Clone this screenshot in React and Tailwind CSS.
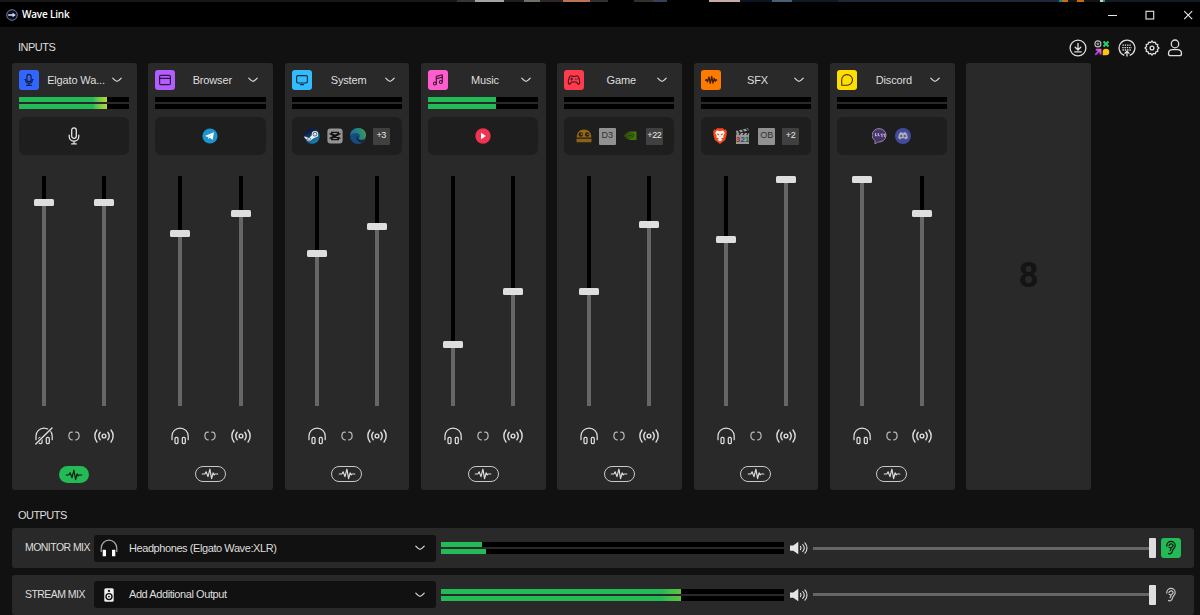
import React from "react";

const stroke = {
  fill: "none",
  stroke: "currentColor",
  strokeLinecap: "round",
  strokeLinejoin: "round",
};

function MicIcon({ className }) {
  return (
    <svg viewBox="0 0 12 18" className={className} {...stroke} strokeWidth="1.3">
      <rect x="3.7" y="0.9" width="4.6" height="10.4" rx="2.3" />
      <path d="M1.2 8.2v1.3a4.8 4.6 0 0 0 9.6 0V8.2M6 14.2v2.6M3.7 16.9h4.6" />
    </svg>
  );
}

function SmallMicIcon() {
  return (
    <svg viewBox="0 0 20 20" className="size-5" {...stroke} strokeWidth="1.1">
      <rect x="7.900" y="4.400" width="4.200" height="7.200" rx="2.100" />
      <path d="M5.900 9.500h.8v.5a3.300 3.300 0 0 0 6.600 0v-.5h.8M10 13.400v1.900M7.600 15.400h4.800" />
    </svg>
  );
}

function BrowserIcon() {
  return (
    <svg viewBox="0 0 20 20" className="size-5" {...stroke} strokeWidth="1.2">
      <rect x="4.6" y="5.4" width="10.8" height="9.2" rx="1.2" />
      <path d="M4.6 8.4h10.8" />
    </svg>
  );
}

function SystemIcon() {
  return (
    <svg viewBox="0 0 20 20" className="size-5" {...stroke} strokeWidth="1.2">
      <rect x="4.6" y="5.6" width="10.8" height="7.4" rx="1.4" />
      <path d="M8.4 14.6h3.2" />
    </svg>
  );
}

function MusicIcon() {
  return (
    <svg viewBox="0 0 20 20" className="size-5" {...stroke} strokeWidth="1.1">
      <path d="M8.3 13.4V6.4l6-1.6v7" />
      <path d="M8.3 8.7l6-1.6" />
      <circle cx="6.9" cy="13.5" r="1.5" />
      <circle cx="12.9" cy="12" r="1.5" />
    </svg>
  );
}

function GameIcon() {
  return (
    <svg viewBox="0 0 20 20" className="size-5" {...stroke} strokeWidth="1.1">
      <path d="M7 5.8c1 0 1 .7 3 .7s2-.7 3-.7c1.800 0 2.700 4.400 2.700 6.600 0 2.200-1.500 2.300-2.500.5-.3-.7-.7-.9-1.200-.9H8c-.5 0-.9.2-1.200.9-1 1.800-2.500 1.700-2.500-.5C4.300 10.200 5.200 5.800 7 5.800z" />
      <path d="M6.700 9h2M7.700 8v2M11.500 9h.2M13 9h.2" />
    </svg>
  );
}

function SfxIcon() {
  return (
    <svg viewBox="0 0 20 20" className="size-5" {...stroke} strokeWidth="1.3">
      <path d="M4.500 10.200l1-.8 1 2.400L8 7l1.300 6.400L10.700 6.500l1.300 6.500 1.200-4.500 1.100 2.700.9-1.600.5.500" />
    </svg>
  );
}

function ChatIcon() {
  return (
    <svg viewBox="0 0 20 20" className="size-5" {...stroke} strokeWidth="1.1">
      <path d="M4.700 15.200V10a5.400 5.300 0 1 1 5.400 5.200z" />
    </svg>
  );
}

function Chevron() {
  return (
    <svg viewBox="0 0 10 6" className="h-[6px] w-[10px] shrink-0 text-[#d8d8d8]" {...stroke} strokeWidth="1.2">
      <path d="M0.800 1.200C2.500 3 3.800 4.300 5 4.300S7.500 3 9.200 1.200" />
    </svg>
  );
}

function HeadphonesIcon({ muted }) {
  return (
    <svg viewBox="0 0 20 20" className="size-5" {...stroke} strokeWidth="1.250">
      <path d="M2 13.700V10a8.100 8 0 0 1 16.200 0v3.700" />
      <rect x="5" y="11.400" width="3" height="6.300" rx="1.100" />
      <rect x="12.300" y="11.400" width="3" height="6.300" rx="1.100" />
      {muted && (
        <>
          <path d="M1.300 18.500L17.500 2" stroke="#292929" strokeWidth="3.200" />
          <path d="M1.800 18L18 2" strokeWidth="1.400" />
        </>
      )}
    </svg>
  );
}

function LinkIcon() {
  return (
    <svg viewBox="0 0 12 10" className="h-[10px] w-3 text-[#b5b5b5]" {...stroke} strokeWidth="1.250">
      <path d="M4.300 1.200H3.800A2.900 3.800 0 0 0 3.800 8.800h.5M7.700 1.200h.5a2.900 3.800 0 0 1 0 7.600h-.5" />
    </svg>
  );
}

function BroadcastIcon() {
  return (
    <svg viewBox="0 0 20 16" className="h-4 w-5" {...stroke} strokeWidth="1.400">
      <circle cx="10" cy="8" r="1.900" />
      <path d="M6.200 4.300a6 6 0 0 0 0 7.400M13.800 4.300a6 6 0 0 1 0 7.400" />
      <path d="M3 2a9.500 9.500 0 0 0 0 12M17 2a9.500 9.500 0 0 1 0 12" />
    </svg>
  );
}

function EffectsIcon() {
  return (
    <svg viewBox="0 0 18 12" className="h-3 w-[18px]" {...stroke} strokeWidth="1.150">
      <path d="M1.200 6h2.600l1.300-2.200L7 8.600 8.900 1.200l1.700 9.400 1.500-5.800L13.200 7l.7-1h2.900" />
    </svg>
  );
}

function EarIcon() {
  return (
    <svg viewBox="0 0 12 16" className="h-4 w-3" {...stroke} strokeWidth="1.150">
      <path d="M1.800 6.200V5.600a4.200 4.200 0 0 1 8.400 0c0 2.600-2.400 3.300-2.800 5.600-.4 2.500-2.400 3.100-3.900 2.200" />
      <path d="M3.900 5.800a2.200 2.200 0 0 1 4.300-.3M8.200 5.500C8.200 7 6 6.800 6 8.400M4.200 7.500c1.900-.1 2.300 2.300.8 3.200" />
    </svg>
  );
}

function SpeakerIcon() {
  return (
    <svg viewBox="0 0 18 14" className="h-[14px] w-[18px] text-[#e4e4e4]" {...stroke} strokeWidth="1.100">
      <path d="M0 4.500h3.200L8.300 0.800v12.400L3.200 9.800H0z" fill="currentColor" stroke="none" />
      <path d="M10.500 5.400c.7 1 .7 2.200 0 3.200M12.700 3.500c1.800 2 1.800 5 0 7M14.900 1.800c2.800 3 2.800 7.400 0 10.400" />
    </svg>
  );
}

/* App icons shown under the meters */

function Telegram() {
  return (
    <svg viewBox="0 0 16 16" className="size-4">
      <circle cx="8" cy="8" r="7.600" fill="#1f95cf" />
      <path d="M2.900 7.900L12 4.300 10.600 11.800 7.500 9.700 6.200 11 6 8.900z" fill="#fff" />
      <path d="M6 8.900L10.300 5.900 7 9.400 6.200 11z" fill="#b6d5e7" />
    </svg>
  );
}

function Steam() {
  return (
    <svg viewBox="0 0 16 16" className="size-4">
      <defs>
        <linearGradient id="steam" x1="0" y1="0" x2="0.600" y2="1">
          <stop offset="0.300" stopColor="#101c44" />
          <stop offset="1" stopColor="#1585bd" />
        </linearGradient>
      </defs>
      <circle cx="8" cy="8" r="7.700" fill="url(#steam)" />
      <path d="M0.300 8.200L5 10 8.500 6.400l3 2.800-4 2.600a2.600 2.600 0 0 1-4.900-.6L0.600 10z" fill="#e8edf2" />
      <circle cx="11" cy="6.200" r="3.200" fill="#e8edf2" />
      <circle cx="11" cy="6.200" r="1.900" fill="#dfe8ef" stroke="#21344f" strokeWidth="0.700" />
      <circle cx="5" cy="11" r="1.500" fill="none" stroke="#34506d" strokeWidth="0.600" />
    </svg>
  );
}

function CapCut() {
  return (
    <svg viewBox="0 0 16 16" className="size-4">
      <rect x="0.400" y="0.400" width="15.200" height="15.200" rx="3" fill="#949494" />
      <path d="M13.500 5.500L4.600 10.500v1.200h6.800v-1.200L2.500 5.500M13.500 10.500L4.600 5.500V4.300h6.800v1.200L2.500 10.500" fill="none" stroke="#111" strokeWidth="1.300" />
    </svg>
  );
}

function Edge() {
  return (
    <svg viewBox="0 0 16 16" className="size-4">
      <defs>
        <linearGradient id="edge" x1="0" y1="0.400" x2="1" y2="0.200">
          <stop offset="0" stopColor="#1c6da0" />
          <stop offset="0.550" stopColor="#21867f" />
          <stop offset="1" stopColor="#4e9a45" />
        </linearGradient>
      </defs>
      <circle cx="8" cy="8" r="8" fill="#164d80" />
      <path d="M0 7.500C.8 2.800 4 0 8.300 0 12.700 0 16 3.200 16 7c0 3-2 4.600-4.500 4.600-1.900 0-3-.8-2.200-1.800C11 7.600 9 5 6.200 5 3.500 5 1 5.800 0 7.500z" fill="url(#edge)" />
      <path d="M7.800 7.200c-1.500 4 2 6.200 6.700 4.800-.6 1-1.300 1.700-2 2.300C8 14.500 4.500 10.500 7.800 7.200z" fill="#1e1e1e" />
    </svg>
  );
}

function PlayBadge() {
  return (
    <svg viewBox="0 0 16 16" className="size-4">
      <circle cx="8" cy="8" r="7.700" fill="#f03350" />
      <path d="M6 4.700L10.900 8 6 11.300z" fill="#fff" />
    </svg>
  );
}

function Burger() {
  return (
    <svg viewBox="0 0 16 16" className="size-4">
      <path d="M0.700 9.500C.7 4.500 3.500 1.600 8 1.600s7.300 2.900 7.300 7.900z" fill="#966713" />
      <rect x="0.500" y="10.800" width="15" height="3.500" rx="0.500" fill="#8d6013" />
      <circle cx="4.700" cy="6.500" r="2.200" fill="#27221a" />
      <circle cx="11.200" cy="6.500" r="2.200" fill="#27221a" />
      <circle cx="5.400" cy="6.200" r="0.800" fill="#a87721" />
      <circle cx="11.900" cy="6.200" r="0.800" fill="#a87721" />
    </svg>
  );
}

function Nvidia() {
  return (
    <svg viewBox="0 0 16 16" className="size-4">
      <path d="M6.300 3.500H13.500V12H6.300z" fill="#467207" />
      <path d="M1.500 7.800C3 5.400 4.800 4.300 7 4.300c2.300 0 3.800 1.500 4.800 3.200-1.200 2-3 3.400-5.400 3.400-2 0-3.700-1-4.900-3.100z" fill="#254009" stroke="#467207" strokeWidth="0.700" />
      <path d="M4 7.700C5 6.300 6 5.900 7 5.900c1.100 0 2 .7 2.600 1.600-.8 1.200-1.700 1.800-2.900 1.800-1 0-1.900-.5-2.700-1.600z" fill="none" stroke="#528309" strokeWidth="0.900" />
    </svg>
  );
}

function Brave() {
  return (
    <svg viewBox="0 0 16 16" className="size-4">
      <path d="M5 0.300h6l1.300 1.400 1.600-.1 1.100 2.300-.5 1.700.2 1-1.500 5.500L8 15.900l-5.200-3.800L1.300 6.600l.2-1L1 3.900l1.100-2.300 1.600.1z" fill="#f9471c" />
      <path d="M8 3.200l3-.6 1.800 2.500-1.500 2.700.3 1.600L8.900 10.500l1.500 1.300L8 13.600l-2.400-1.800 1.500-1.300-2.700-1.100.3-1.600-1.500-2.700L5 2.600z" fill="#fff" />
      <path d="M5 5.700l2 .6-.5 1zM11 5.700l-2 .6.500 1zM8 7.700v1.600" fill="#f9471c" stroke="#f9471c" strokeWidth="0.600" />
    </svg>
  );
}

function Clapper() {
  return (
    <div className="flex size-4 flex-col">
      <svg viewBox="0 0 16 7" className="h-[7px] w-4">
        <path d="M0.800 3L13 0.300l.7 2.200L1.500 5zM1.500 5h12.700v2H1.500z" fill="#a2a2a2" />
        <path d="M3 2.300L5 4.500M7 1.400l2 2.300M11 .6l2 2.200M4 7l1.500-2M8 7l1.500-2M11.700 7l1.300-2" stroke="#242424" strokeWidth="1.300" />
      </svg>
      <div className="ml-px flex h-[9px] w-[13px] items-center justify-center bg-[#999999] text-[8px] leading-[9px] font-bold">
        <span className="text-[#b0260f]">3</span>
        <span className="text-[#174f94]">2</span>
        <span className="text-[#1f6d28]">1</span>
      </div>
    </div>
  );
}

function QuoteBubble() {
  return (
    <svg viewBox="0 0 16 18" className="h-[18px] w-4">
      <path d="M3 17V13.700A7 6.700 0 1 1 8 14.900c-2 0-3.500.7-5 2.100z" fill="#49336f" stroke="#8e8a9b" strokeWidth="1" />
      <path d="M3.500 6v2.700h1.300M6.300 6v2.700h1.300M8.700 7.300H10V10M11.500 7.300h1.300V10" stroke="#b5afbf" fill="none" strokeWidth="1.200" />
    </svg>
  );
}

function DiscordBadge() {
  return (
    <svg viewBox="0 0 16 16" className="size-4">
      <circle cx="8" cy="8" r="8" fill="#424b9c" />
      <path d="M5 4.500l1.500-.5.500.7h2l.5-.7 1.500.5c1.300 1.700 1.900 3.700 1.700 5.800-.7.600-1.500 1-2.200 1.200l-.8-1.200H6.300l-.8 1.200c-.7-.2-1.500-.6-2.200-1.200C3.100 8.200 3.700 6.200 5 4.500z" fill="#aaabb3" />
      <circle cx="6.200" cy="8" r="1.100" fill="#424b9c" />
      <circle cx="9.800" cy="8" r="1.100" fill="#424b9c" />
    </svg>
  );
}

function Initials({ children }) {
  return (
    <div className="flex size-[17px] items-center justify-center rounded-[1px] bg-[#919191] text-[9px] text-[#303030]">
      {children}
    </div>
  );
}

function More({ children }) {
  return (
    <div className="flex size-[17px] items-center justify-center rounded-[1px] bg-[#404040] text-[9px] tracking-[-0.3px] text-[#e8e8e8]">
      {children}
    </div>
  );
}

const channels = [
  { name: "Elgato Wa...", color: "bg-[#3366ff]", icon: <SmallMicIcon />, level: [79.5, 79.5], hot: true, apps: [<MicIcon className="h-[18px] w-3 text-[#e5e5e5]" />], monitor: 202, stream: 202, muted: true, fx: true },
  { name: "Browser", color: "bg-[#b35cff]", icon: <BrowserIcon />, level: [0, 0], apps: [<Telegram />], monitor: 233, stream: 213 },
  { name: "System", color: "bg-[#33bbff]", icon: <SystemIcon />, level: [0, 0], apps: [<Steam />, <CapCut />, <Edge />, <More>+3</More>], monitor: 253, stream: 226.5 },
  { name: "Music", color: "bg-[#ff5ccd]", icon: <MusicIcon />, level: [61.5, 62], apps: [<PlayBadge />], monitor: 344.5, stream: 291 },
  { name: "Game", color: "bg-[#ff3b4e]", icon: <GameIcon />, level: [0, 0], apps: [<Burger />, <Initials>D3</Initials>, <Nvidia />, <More>+22</More>], monitor: 291, stream: 224.5 },
  { name: "SFX", color: "bg-[#ff7b00]", icon: <SfxIcon />, level: [0, 0], apps: [<Brave />, <Clapper />, <Initials>OB</Initials>, <More>+2</More>], monitor: 239.5, stream: 179.5 },
  { name: "Discord", color: "bg-[#ffdd00]", icon: <ChatIcon />, level: [0, 0], apps: [<QuoteBubble />, <DiscordBadge />], monitor: 179.5, stream: 213 },
];

function Meter({ level, fill }) {
  return (
    <div className="flex flex-col gap-[2px]">
      {level.map((value, i) => (
        <div key={i} className="h-[5px] bg-black">
          <div className={"h-full " + fill} style={{ width: value + "%" }} />
        </div>
      ))}
    </div>
  );
}

function Fader({ at }) {
  return (
    <div className="flex h-[230px] w-5 flex-col items-center">
      <div className="w-1 bg-black" style={{ height: at - 3.5 - 176 }} />
      <div className="h-[7px] w-5 shrink-0 rounded-[1.5px] bg-[#dedede]" />
      <div className="w-1 flex-1 bg-[#666666]" />
    </div>
  );
}

function Channel({ channel }) {
  return (
    <section className="flex flex-col rounded-[3px] bg-[#292929] pt-[7px] pr-[7.6px] pl-[7px]">
      <div className="flex h-5 items-center">
        <div className={"flex size-5 shrink-0 items-center justify-center rounded-[3px] text-black/75 " + channel.color}>
          {channel.icon}
        </div>
        <p className="ml-[5px] w-[64px] text-center text-[11px] tracking-[-0.15px] whitespace-nowrap text-[#dedede]">
          {channel.name}
        </p>
        <div className="ml-1">
          <Chevron />
        </div>
      </div>

      <div className="mt-[7px]">
        <Meter level={channel.level} fill={channel.hot ? "bg-linear-to-r from-[#22bb55] from-84% to-[#b6d533]" : "bg-[#22bb55]"} />
      </div>

      <div className="mt-2 flex h-[38px] items-center justify-center gap-[7px] rounded-[6px] bg-[#1e1e1e]">
        {channel.apps.map((app, i) => (
          <React.Fragment key={i}>{app}</React.Fragment>
        ))}
      </div>

      <div className="mt-[21px] flex justify-between px-[15px]">
        <Fader at={channel.monitor} />
        <Fader at={channel.stream} />
      </div>

      <div className="mt-5 flex h-5 items-center justify-between px-[15px] text-[#dedede]">
        <HeadphonesIcon muted={channel.muted} />
        <LinkIcon />
        <BroadcastIcon />
      </div>

      <div className="mt-5 flex justify-center">
        {channel.fx ? (
          <button className="flex h-[17px] w-[30px] items-center justify-center rounded-full bg-[#22bb55] text-[#111111]">
            <EffectsIcon />
          </button>
        ) : (
          <button className="flex h-4 w-[31px] items-center justify-center rounded-full border border-[#c8c8c8] text-[#dedede]">
            <EffectsIcon />
          </button>
        )}
      </div>
    </section>
  );
}

function OutputRow({ label, icon, device, level, fill, listening }) {
  return (
    <section className="flex h-10 items-center rounded-[3px] bg-[#292929] pr-[13px] pl-[13px] text-[#dedede]">
      <p className="w-[69px] text-[10.5px] tracking-[-0.55px] whitespace-nowrap">{label}</p>
      <div className="flex h-[27px] w-[342px] items-center rounded-[3px] bg-[#111111] pr-[11px] pl-[5px] text-[11px]">
        <div className="flex w-5 justify-center">{icon}</div>
        <span className="ml-[10px] flex-1 text-[11px] tracking-[-0.42px]">{device}</span>
        <Chevron />
      </div>
      <div className="ml-[5px] w-[343px]">
        <Meter level={level} fill={fill} />
      </div>
      <div className="ml-[6px]">
        <SpeakerIcon />
      </div>
      <div className="ml-[5px] h-[3px] flex-1 bg-[#666666]" />
      <div className="h-5 w-[7px] rounded-[1px] bg-[#dedede]" />
      <button
        className={
          "ml-[5px] flex size-5 items-center justify-center rounded-[3px] " +
          (listening ? "bg-[#22bb55] text-[#111111]" : "text-[#c8c8c8]")
        }
      >
        <EarIcon />
      </button>
    </section>
  );
}

function Toolbar() {
  return (
    <div className="flex items-center text-[#dedede]">
      <svg viewBox="0 0 18 18" className="mr-[7px] size-[18px]" {...stroke} strokeWidth="1.300">
        <circle cx="9" cy="9" r="7.900" />
        <path d="M9 4.500v6M6.200 8.200L9 11l2.800-2.800M5.800 12.800h6.400" />
      </svg>
      <svg viewBox="0 0 16 16" className="mr-2 size-4">
        <defs>
          <linearGradient id="arrow" x1="0" y1="1" x2="1" y2="0">
            <stop offset="0" stopColor="#823bff" />
            <stop offset="1" stopColor="#ff5ccd" />
          </linearGradient>
        </defs>
        <circle cx="3.900" cy="3.900" r="3" fill="none" stroke="#bfbfbf" strokeWidth="1.100" />
        <circle cx="3.900" cy="3.900" r="1" fill="none" stroke="#bfbfbf" strokeWidth="0.900" />
        <path d="M9.500 1.500l5 5M14.500 1.500l-5 5" stroke="#29d267" strokeWidth="2" />
        <path d="M1.200 14.800L6.200 9.800M1.800 9.700h4.700v4.900" fill="none" stroke="url(#arrow)" strokeWidth="1.900" />
        <path d="M12 8.700a3.300 3.300 0 0 1 3.300 3.300 3.300 3.300 0 0 1-3.300 3.300H8.700V12A3.300 3.300 0 0 1 12 8.700z" fill="#ffc40c" />
      </svg>
      <svg viewBox="0 0 18 18" className="mr-2 size-[18px]" {...stroke} strokeWidth="1.300">
        <path d="M5.800 16.200a7.900 7.900 0 1 1 6.400 0" />
        <path d="M4.500 6.200h9M4.200 8.600h9.600M4.500 11h9" strokeDasharray="1.400 0.900" strokeLinecap="butt" strokeWidth="1.300" />
        <path d="M9 17v-4.500M7 14.300l2-2 2 2" />
      </svg>
      <svg viewBox="0 0 16 16" className="mr-[7px] size-4" {...stroke} strokeWidth="1.300">
        <path d="M6.600 2.600L8 1l1.400 1.600L11.300 2.200l.6 1.900 1.900.6-.4 1.900L15 8l-1.600 1.400.4 1.900-1.900.6-.6 1.900-1.900-.4L8 15l-1.400-1.600-1.900.4-.6-1.900-1.900-.6.4-1.900L1 8l1.600-1.400-.4-1.900 1.900-.6.6-1.900z" />
        <circle cx="8" cy="8" r="1.900" />
      </svg>
      <svg viewBox="0 0 16 18" className="h-[18px] w-4" {...stroke} strokeWidth="1.300">
        <ellipse cx="8" cy="4.900" rx="3.700" ry="3.900" />
        <path d="M1.500 14.700c0-2.900 1.500-4 4-4h5c2.500 0 4 1.100 4 4 0 1.500-.7 2-2 2h-9c-1.300 0-2-.5-2-2z" />
      </svg>
    </div>
  );
}

function TitleBar() {
  return (
    <header className="flex h-[25px] items-center bg-black pr-[7px] pl-[6px] text-[#e8e8e8]">
      <svg viewBox="0 0 12 12" className="size-3" fill="none">
        <circle cx="6" cy="6" r="5.300" fill="#0b1028" stroke="#8288a5" strokeWidth="0.900" />
        <path d="M2.200 6h2M3.500 6h4.500" stroke="#dcdfed" strokeWidth="1.300" />
        <path d="M6.500 3.800L9.800 6 6.500 8.200z" fill="#dcdfed" />
      </svg>
      <h1 className="ml-1 flex-1 font-['Open_Sans',sans-serif] text-[10px] font-semibold tracking-[-0.2px] text-white">Wave Link</h1>
      <svg viewBox="0 0 85 10" className="h-[10px] w-[85px]" fill="none" stroke="#e8e8e8" strokeWidth="1.100">
        <path d="M0 5.500h9M76.200 1.200l8 8M84.200 1.200l-8 8" />
        <rect x="38" y="1.300" width="7.700" height="7.700" />
      </svg>
    </header>
  );
}

export default function App() {
  return (
    <div className="h-[615px] w-[1200px] overflow-hidden bg-[#111111] font-['Liberation_Sans',Arial,sans-serif]">
      {/* Sliver of the window behind */}
      <div className="flex h-[2px] bg-black">
        <div className="w-[457px] bg-[#171717]" />
        <div className="w-[18px] bg-[#353535]" />
        <div className="w-[29px] bg-[#a5a2a4]" />
        <div className="w-[20px] bg-[#1d1f1a]" />
        <div className="w-[16px] bg-[#6f7068]" />
        <div className="w-[23px] bg-[#2d2624]" />
        <div className="w-[27px] bg-[#b97455]" />
        <div className="w-[18px] bg-[#303030]" />
        <div className="w-[26px] bg-black" />
        <div className="w-[19px] bg-[#303030]" />
        <div className="w-[14px] bg-[#364058]" />
        <div className="w-[42px] bg-black" />
        <div className="w-[31px] bg-[#c5aaa5]" />
        <div className="w-[32px] bg-[#0c1522]" />
        <div className="w-[20px] bg-[#486075]" />
        <div className="w-[46px] bg-[#101a25]" />
        <div className="w-[221px] bg-[#1c2838]" />
        <div className="w-[3px] bg-[#16858c]" />
        <div className="w-[6px] bg-[#c96c0d]" />
        <div className="w-[9px] bg-[#151515]" />
        <div className="w-[7px] bg-[#c96c0d]" />
        <div className="w-[16px] bg-[#141414]" />
        <div className="w-[3px] bg-[#cccccc]" />
        <div className="w-[2px] bg-[#139a54]" />
        <div className="flex-1 bg-[#131c26]" />
      </div>

      <TitleBar />

      <div className="flex h-9 items-center justify-between pt-[5px] pr-[17px] pl-[18px]">
        <h2 className="text-[11px] tracking-[-0.5px] text-[#dedede]">INPUTS</h2>
        <Toolbar />
      </div>

      <main className="ml-3 grid h-[427px] w-[1079px] grid-cols-8 gap-[11.5px]">
        {channels.map((channel) => (
          <Channel key={channel.name} channel={channel} />
        ))}
        <section className="flex items-center justify-center rounded-[3px] bg-[#292929] font-[Roboto,sans-serif] text-[35px] font-bold text-[#141414]">
          8
        </section>
      </main>

      <h2 className="mt-[17px] mb-px ml-[18px] h-5 text-[11px] leading-4 tracking-[-0.55px] text-[#dedede]">OUTPUTS</h2>

      <div className="mr-[6px] ml-3 flex flex-col gap-[6.5px]">
        <OutputRow
          label="MONITOR MIX"
          device="Headphones (Elgato Wave:XLR)"
          level={[12, 13]}
          fill="bg-[#22bb55]"
          listening
          icon={
            <svg viewBox="0 0 18 18" className="size-[18px]" fill="none">
              <path d="M1.200 13V9.200a7.800 8 0 0 1 15.600 0V13" stroke="#a8a8a8" strokeWidth="1.200" />
              <path d="M2.700 10.700h2.500a.8.800 0 0 1 .8.800v5.800H2.700zM15.300 10.700h-2.500a.8.800 0 0 0-.8.800v5.800h3.300z" fill="#fff" />
            </svg>
          }
        />
        <OutputRow
          label="STREAM MIX"
          device="Add Additional Output"
          level={[70, 70]}
          fill="bg-linear-to-r from-[#22bb55] from-92% to-[#5cc43e]"
          icon={
            <svg viewBox="0 0 10 14" className="h-[14px] w-[10px]">
              <rect x="0.300" y="0.300" width="9.400" height="13.400" rx="1.500" fill="#efefef" />
              <circle cx="5" cy="8.600" r="3" fill="#efefef" stroke="#111" strokeWidth="1.400" />
              <circle cx="5" cy="8.600" r="0.900" fill="#111" />
              <circle cx="5" cy="2.900" r="1.100" fill="#111" />
            </svg>
          }
        />
      </div>
    </div>
  );
}
